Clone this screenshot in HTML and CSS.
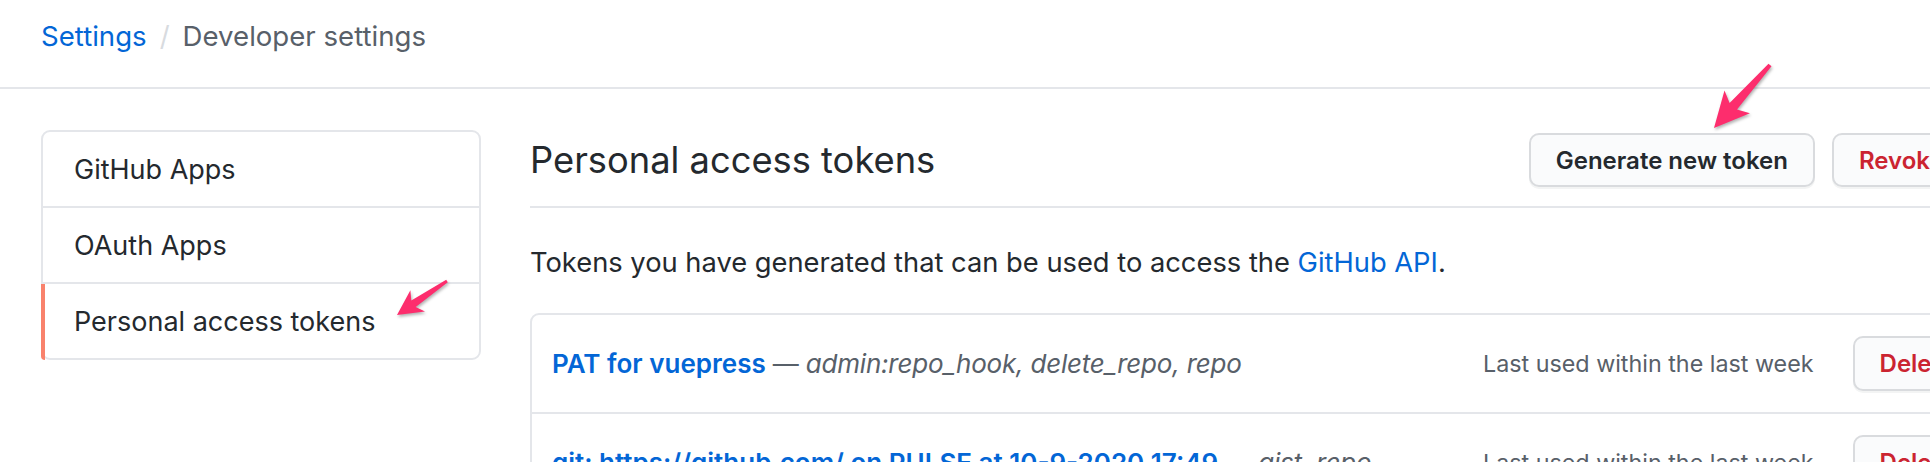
FILE: index.html
```html
<!DOCTYPE html>
<html lang="en">
<head>
<meta charset="utf-8">
<title>Personal access tokens</title>
<link rel="stylesheet" href="styles.css">
</head>
<body>
<header class="page-header">
  <nav class="breadcrumb"><a class="crumb-link" href="#">Settings</a><span class="crumb-sep">/</span><span class="crumb-current">Developer settings</span></nav>
</header>
<div class="layout">
  <nav class="side-menu">
    <a class="menu-item" href="#">GitHub Apps</a>
    <a class="menu-item" href="#">OAuth Apps</a>
    <a class="menu-item selected" href="#">Personal access tokens</a>
  </nav>
  <main class="main">
    <div class="subhead">
      <h2 class="subhead-heading">Personal access tokens</h2>
      <div class="subhead-actions">
        <a class="btn" href="#">Generate new token</a>
        <a class="btn btn-danger" href="#">Revoke all</a>
      </div>
    </div>
    <p class="description">Tokens you have generated that can be used to access the <a class="link" href="#">GitHub API</a>.</p>
    <div class="token-list">
      <div class="token-row">
        <div class="token-info"><a class="token-name" href="#">PAT for vuepress</a><span class="token-scopes"> — <em>admin:repo_hook, delete_repo, repo</em></span></div>
        <span class="last-used">Last used within the last week</span>
        <a class="btn btn-danger btn-delete" href="#">Delete</a>
      </div>
      <div class="token-row">
        <div class="token-info"><a class="token-name" href="#">git: https://github.com/ on PULSE at 10-9-2020 17:49</a><span class="token-scopes"> — <em>gist, repo</em></span></div>
        <span class="last-used">Last used within the last week</span>
        <a class="btn btn-danger btn-delete" href="#">Delete</a>
      </div>
    </div>
  </main>
</div>
<svg class="annotations" width="1930" height="462" viewBox="0 0 1930 462" aria-hidden="true">
  <polygon class="arrow" points="397,315 425.0,311.6 415.7,307.1 447.8,282.2 446.2,279.8 411.3,300.5 410.4,290.2"/>
  <polygon class="arrow" points="1714,128 1749.9,113.2 1737.0,109.6 1771.5,66.3 1768.5,63.7 1729.6,103.0 1724.5,90.6"/>
</svg>
</body>
</html>
```

FILE: styles.css
```css
html, body {
  margin: 0;
  padding: 0;
  overflow: hidden;
  background: #ffffff;
}

body {
  position: relative;
  width: 1930px;
  height: 462px;
  font-family: Inter, "Noto Sans", "DejaVu Sans", sans-serif;
  color: #24292e;
}

a {
  text-decoration: none;
}

.page-header {
  box-sizing: border-box;
  height: 89px;
  padding: 19px 0 0 41px;
  border-bottom: 2px solid #e4e6ea;
}

.breadcrumb {
  display: flex;
  font-size: 27.6px;
  line-height: 34px;
}

.crumb-link {
  color: #0366d6;
}

.crumb-sep {
  color: #d8dbdf;
  margin: 0 13px 0 13px;
}

.crumb-current {
  color: #586069;
}

.layout {
  display: flex;
  align-items: flex-start;
  gap: 49px;
  padding: 41px 0 0 41px;
}

.side-menu {
  flex: none;
  box-sizing: border-box;
  width: 440px;
  display: flex;
  flex-direction: column;
  border: 2px solid #e4e6ea;
  border-radius: 9px;
}

.menu-item {
  position: relative;
  display: block;
  height: 74px;
  line-height: 76px;
  padding-left: 31px;
  font-size: 27px;
  color: #24292e;
}

.menu-item + .menu-item {
  border-top: 2px solid #e4e6ea;
}

.menu-item.selected::before {
  content: "";
  position: absolute;
  left: -2px;
  top: 0;
  bottom: -2px;
  width: 4px;
  background: #f9826c;
  border-bottom-left-radius: 9px;
}

.main {
  flex: none;
  width: 1473px;
}

.subhead {
  display: flex;
  align-items: center;
  padding: 3px 0 19px;
  border-bottom: 2px solid #e4e6ea;
}

.subhead-heading {
  flex: 1;
  margin: 0;
  font-size: 36.3px;
  font-weight: 400;
  color: #24292e;
}

.subhead-actions {
  display: flex;
  gap: 17px;
}

.btn {
  box-sizing: border-box;
  display: inline-flex;
  align-items: center;
  height: 54px;
  padding: 0 25px;
  font-size: 24px;
  font-weight: 600;
  color: #24292e;
  background: #fafbfc;
  border: 2px solid #d9dbde;
  border-radius: 10px;
  box-shadow: 0 2px 0 rgba(27, 31, 35, 0.05);
  white-space: nowrap;
}

.btn-danger {
  color: #cb2431;
}

.description {
  margin: 38px 0 0;
  font-size: 27.3px;
  line-height: 34px;
  color: #24292e;
}

.link {
  color: #0366d6;
}

.token-list {
  margin-top: 33px;
  border: 2px solid #e4e6ea;
  border-radius: 9px;
}

.token-row {
  display: flex;
  align-items: center;
  padding: 21px 20px;
}

.token-row + .token-row {
  border-top: 2px solid #e4e6ea;
}

.token-info {
  flex: 1;
  min-width: 0;
  white-space: nowrap;
  font-size: 26px;
  line-height: 34px;
}

.token-name {
  color: #0366d6;
  font-weight: 600;
}

.token-scopes {
  color: #586069;
  letter-spacing: -0.2px;
}

.token-scopes em {
  font-style: italic;
}

.last-used {
  font-size: 23.3px;
  color: #586069;
  white-space: nowrap;
}

.btn-delete {
  height: 55px;
  margin-left: 39px;
}

.annotations {
  position: absolute;
  top: 0;
  left: 0;
  pointer-events: none;
}

.arrow {
  fill: #fd2d6d;
  filter: drop-shadow(1px 2px 1.5px rgba(0, 0, 0, 0.3));
}
```
